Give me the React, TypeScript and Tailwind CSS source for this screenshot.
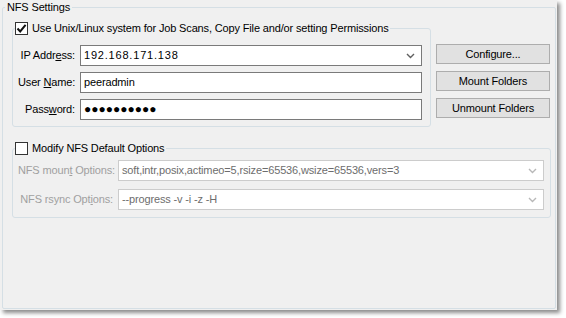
import React from 'react';

const font = "font-['Liberation_Sans',Arial,sans-serif]";

function Check({ checked }: { checked?: boolean }) {
  return (
    <span className="inline-flex h-[13px] w-[13px] shrink-0 items-center justify-center border border-[#333] bg-white">
      {checked && (
        <svg width="11" height="11" viewBox="0 0 11 11">
          <path d="M1.5 5.5 L4.2 8.4 L9.6 1.8" fill="none" stroke="#111" strokeWidth="2" />
        </svg>
      )}
    </span>
  );
}

function Chevron({ disabled }: { disabled?: boolean }) {
  return (
    <svg width="9" height="6" viewBox="0 0 9 6" className="mr-[6px] shrink-0">
      <path d="M1 1 L4.5 4.5 L8 1" fill="none" stroke={disabled ? '#b8b8b8' : '#606060'} strokeWidth="1.4" />
    </svg>
  );
}

function Label({ children, w, disabled }: { children: React.ReactNode; w: string; disabled?: boolean }) {
  return (
    <span className={`${w} shrink-0 whitespace-nowrap text-right ${disabled ? 'text-[#a0a0a0]' : 'text-black'}`}>
      {children}
    </span>
  );
}

function Btn({ children }: { children: React.ReactNode }) {
  return (
    <button className="h-[20px] w-[114px] border border-[#adadad] bg-[#e1e1e1] text-[11px] text-black">
      {children}
    </button>
  );
}

export default function App() {
  return (
    <div className={`h-[318px] w-[566px] bg-white text-[11px] leading-[13px] tracking-[-0.15px] ${font}`}>
      <div className="h-[310px] w-[557px] bg-[#f0f0f0] pl-[2px] pt-[1px] shadow-[3px_3px_4px_rgba(0,0,0,0.45)]">
        <fieldset className="h-[308px] w-[554px] rounded-[2px] border border-[#d5dfe5]">
          <legend className="ml-[2px] whitespace-nowrap px-[2px] text-black">NFS Settings</legend>

          <div className="pl-[9px] pt-[8px]">
            <div className="flex items-start gap-[5px]">
              <fieldset className="w-[419px] rounded-[3px] border border-[#d5dfe5]">
                <legend className="ml-[2px] flex items-center gap-[4px] whitespace-nowrap pr-[2px]">
                  <Check checked />
                  <span>Use Unix/Linux system for Job Scans, Copy File and/or setting Permissions</span>
                </legend>
                <div className="flex flex-col gap-[6px] pb-[6px] pl-[5px] pr-[7px] pt-[10px]">
                  <div className="flex items-center gap-[5px]">
                    <Label w="w-[57px]">
                      IP Addr<u>e</u>ss:
                    </Label>
                    <div className="flex h-[21px] w-[342px] items-center justify-between border border-[#7a7a7a] bg-white pl-[3px]">
                      <span className="tracking-[0.8px]">192.168.171.138</span>
                      <Chevron />
                    </div>
                  </div>
                  <div className="flex items-center gap-[5px]">
                    <Label w="w-[57px]">
                      User <u>N</u>ame:
                    </Label>
                    <div className="flex h-[21px] w-[342px] items-center border border-[#7a7a7a] bg-white pl-[3px]">
                      peeradmin
                    </div>
                  </div>
                  <div className="flex items-center gap-[5px]">
                    <Label w="w-[57px]">
                      Pass<u>w</u>ord:
                    </Label>
                    <div className="flex h-[21px] w-[342px] items-center border border-[#7a7a7a] bg-white pl-[3px] text-[12px] tracking-normal">
                      ●●●●●●●●●●
                    </div>
                  </div>
                </div>
              </fieldset>

              <div className="mt-[22px] flex flex-col gap-[7px]">
                <Btn>Configure...</Btn>
                <Btn>Mount Folders</Btn>
                <Btn>Unmount Folders</Btn>
              </div>
            </div>

            <fieldset className="mt-[15px] w-[538px] rounded-[3px] border border-[#d5dfe5]">
              <legend className="ml-[2px] flex items-center gap-[4px] whitespace-nowrap pr-[2px]">
                <Check />
                <span>Modify NFS Default Options</span>
              </legend>
              <div className="flex flex-col gap-[8px] pb-[7px] pl-[5px] pr-[6px] pt-[5px]">
                <div className="flex items-center gap-[5px]">
                  <Label w="w-[95px]" disabled>
                    NFS moun<u>t</u> Options:
                  </Label>
                  <div className="flex h-[21px] w-[426px] items-center justify-between border border-[#cccccc] bg-white pl-[3px] text-[#6d6d6d]">
                    <span className="whitespace-nowrap">soft,intr,posix,actimeo=5,rsize=65536,wsize=65536,vers=3</span>
                    <Chevron disabled />
                  </div>
                </div>
                <div className="flex items-center gap-[5px]">
                  <Label w="w-[95px]" disabled>
                    NFS rsync Opt<u>i</u>ons:
                  </Label>
                  <div className="flex h-[21px] w-[426px] items-center justify-between border border-[#cccccc] bg-white pl-[3px] text-[#6d6d6d]">
                    <span className="whitespace-nowrap">--progress -v -i -z -H</span>
                    <Chevron disabled />
                  </div>
                </div>
              </div>
            </fieldset>
          </div>
        </fieldset>
      </div>
    </div>
  );
}
